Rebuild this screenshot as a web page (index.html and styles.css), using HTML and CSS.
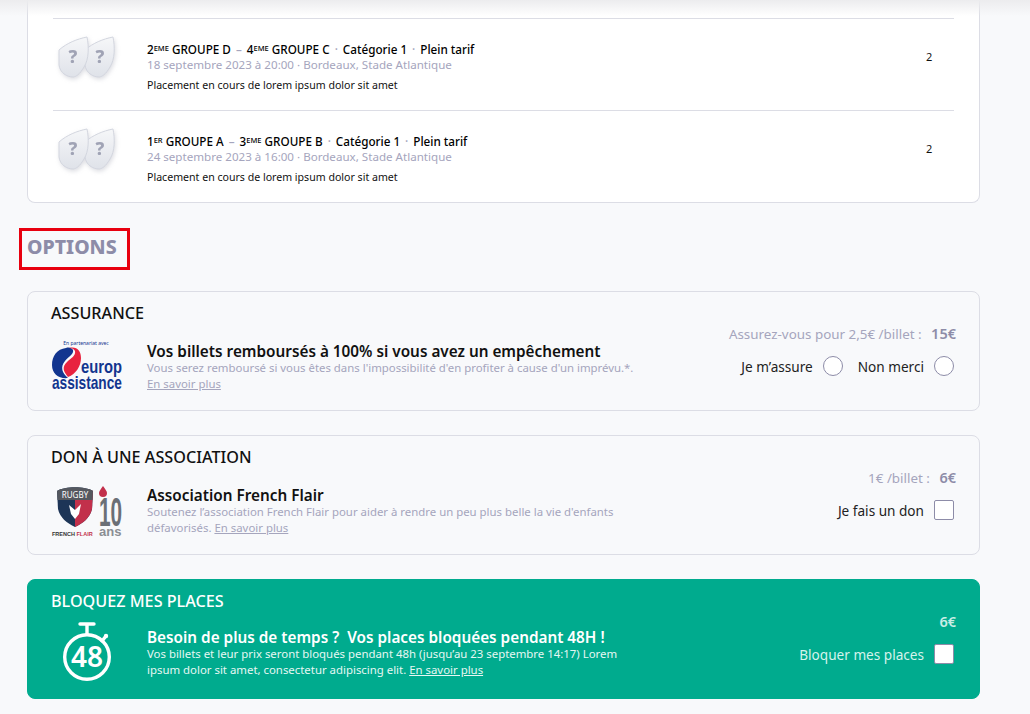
FILE: index.html
```html
<!DOCTYPE html>
<html lang="fr">
<head>
    <meta charset="utf-8" />
    <meta name="viewport" content="width=device-width, initial-scale=1" />
    <title>Options</title>
    <link rel="stylesheet" href="styles.css">
</head>
<body>
    <div class="top-shadow"></div>

    <svg width="0" height="0" class="defs">
        <defs>
            <linearGradient id="shield-fill" x1="0" y1="0" x2="0" y2="1">
                <stop offset="0" stop-color="#f6f7f9" />
                <stop offset="1" stop-color="#dfe2e9" />
            </linearGradient>
            <path id="shield" d="M0 13 C8 6 18 2 28 0 C30 10 30 22 25 30 C21 37 17 40 14 40 C8 40 1 36 0 28 Z" fill="url(#shield-fill)" stroke="#d3d6df" />
            <g id="shields">
                <use href="#shield" x="27" y="1" />
                <use href="#shield" x="1" y="1" />
                <text x="15" y="27" class="shield-mark">?</text>
                <text x="42" y="27" class="shield-mark">?</text>
            </g>
        </defs>
    </svg>

    <div class="page">
        <div class="matches">
            <div class="match">
                <svg class="shields" width="60" height="46" viewBox="0 0 60 46"><use href="#shields" /></svg>
                <div class="match-info">
                    <div class="match-title">2<sup>EME</sup> GROUPE D <span class="dash">–</span> 4<sup>EME</sup> GROUPE C <span class="dot">·</span> Catégorie 1 <span class="dot">·</span> Plein tarif</div>
                    <div class="match-date">18 septembre 2023 à 20:00 · Bordeaux, Stade Atlantique</div>
                    <div class="match-note">Placement en cours de lorem ipsum dolor sit amet</div>
                </div>
                <div class="match-qty">2</div>
            </div>
            <div class="match">
                <svg class="shields" width="60" height="46" viewBox="0 0 60 46"><use href="#shields" /></svg>
                <div class="match-info">
                    <div class="match-title">1<sup>ER</sup> GROUPE A <span class="dash">–</span> 3<sup>EME</sup> GROUPE B <span class="dot">·</span> Catégorie 1 <span class="dot">·</span> Plein tarif</div>
                    <div class="match-date">24 septembre 2023 à 16:00 · Bordeaux, Stade Atlantique</div>
                    <div class="match-note">Placement en cours de lorem ipsum dolor sit amet</div>
                </div>
                <div class="match-qty">2</div>
            </div>
        </div>

        <h2 class="section-title">OPTIONS</h2>

        <div class="option">
            <div class="option-main">
                <h3>ASSURANCE</h3>
                <div class="option-body">
                    <svg class="option-logo" width="72" height="56" viewBox="0 0 72 56">
                        <text x="35" y="5.5" class="ea-small">En partenariat avec</text>
                        <path d="M15 9 C6 10 1 17 1 26 C1 35 8 40 17 39 C11 34 9 28 14 22 C18 17 23 15 22 11 C21 9 18 8 15 9 Z" fill="#12358f" />
                        <path d="M18 9 C26 7 30 12 30 19 C30 27 25 35 17 38 C12 32 11 28 16 23 C20 19 25 17 24 12 C23 10 21 9 18 9 Z" fill="#e8233f" />
                        <text class="ea-big" transform="translate(30 34) scale(.82 1)">europ</text>
                        <text class="ea-big" transform="translate(1 50) scale(.76 1)">assistance</text>
                    </svg>
                    <div class="option-text">
                        <h4>Vos billets remboursés à 100% si vous avez un empêchement</h4>
                        <p>Vous serez remboursé si vous êtes dans l'impossibilité d'en profiter à cause d'un imprévu.*.<br><a href="#">En savoir plus</a></p>
                    </div>
                </div>
            </div>
            <div class="option-side">
                <div class="price">Assurez-vous pour 2,5€ /billet : <b>15€</b></div>
                <div class="choices">
                    <label class="choice">Je m’assure <span class="radio"></span></label>
                    <label class="choice">Non merci <span class="radio"></span></label>
                </div>
            </div>
        </div>

        <div class="option">
            <div class="option-main">
                <h3>DON À UNE ASSOCIATION</h3>
                <div class="option-body">
                    <svg class="option-logo" width="72" height="58" viewBox="0 0 72 58">
                        <path d="M6 8 C14 3 34 3 42 8 L41 26 C39 35 32 40 24 44 C16 40 9 35 7 26 Z" fill="#1d3557" />
                        <path d="M24 5 C31 5 37 6 42 8 L41 26 C39 35 32 40 24 44 Z" fill="#c2304b" />
                        <path d="M6 8 C14 3 34 3 42 8 L41.5 17 L6.5 17 Z" fill="#55585f" />
                        <text x="24" y="14.5" class="ff-rugby">RUGBY</text>
                        <path d="M18 22 L24 27 L30 21 L28 31 L24 36 L20 31 Z" fill="#fff" />
                        <text x="1" y="53" class="ff-name">FRENCH <tspan fill="#c2304b">FLAIR</tspan></text>
                        <path d="M52 3 C54 6 56 8 56 10 A4 4 0 0 1 48 10 C48 8 50 6 52 3 Z" fill="#c2304b" />
                        <text class="ff-ten" transform="translate(48 43) scale(.52 1)">10</text>
                        <text x="48" y="53" class="ff-ans">ans</text>
                    </svg>
                    <div class="option-text">
                        <h4>Association French Flair</h4>
                        <p>Soutenez l’association French Flair pour aider à rendre un peu plus belle la vie d'enfants défavorisés. <a href="#">En savoir plus</a></p>
                    </div>
                </div>
            </div>
            <div class="option-side">
                <div class="price">1€ /billet : <b>6€</b></div>
                <div class="choices">
                    <label class="choice">Je fais un don <span class="check"></span></label>
                </div>
            </div>
        </div>

        <div class="option option-green">
            <div class="option-main">
                <h3>BLOQUEZ MES PLACES</h3>
                <div class="option-body">
                    <svg class="option-logo" width="72" height="64" viewBox="0 0 72 64">
                        <g fill="none" stroke="#fff" stroke-width="3.4">
                            <circle cx="36" cy="38" r="22.3" />
                            <path d="M36 15 V5 M29 5 H43 M51 22 L55 17" stroke-linecap="round" />
                        </g>
                        <circle cx="55" cy="17" r="2.2" fill="#fff" />
                        <text x="36" y="48" class="timer-num">48</text>
                    </svg>
                    <div class="option-text">
                        <h4>Besoin de plus de temps ?&nbsp; Vos places bloquées pendant 48H !</h4>
                        <p>Vos billets et leur prix seront bloqués pendant 48h (jusqu’au 23 septembre 14:17) Lorem ipsum dolor sit amet, consectetur adipiscing elit. <a href="#">En savoir plus</a></p>
                    </div>
                </div>
            </div>
            <div class="option-side">
                <div class="price"><b>6€</b></div>
                <div class="choices">
                    <label class="choice">Bloquer mes places <span class="check"></span></label>
                </div>
            </div>
        </div>
    </div>
</body>
</html>
```

FILE: styles.css
```css
body {
    font-family: 'Noto Sans', Roboto, sans-serif;
    background-color: #f8f9fb;
    color: #111;
    margin: 0;
    padding: 0;
}

.defs {
    position: absolute;
}

.top-shadow {
    position: absolute;
    top: 0;
    left: 0;
    right: 0;
    height: 16px;
    background: linear-gradient(#ececee, rgba(240, 240, 242, 0));
}

.page {
    width: 953px;
    margin-left: 27px;
}

.matches {
    background-color: #fff;
    border: 1px solid #dcdde5;
    border-top: none;
    border-radius: 0 0 8px 8px;
    padding: 18px 25px 0 25px;
    height: 184px;
}

.match {
    display: flex;
    align-items: flex-start;
    height: 91px;
    border-top: 1px solid #dcdde5;
}

.shields {
    margin-top: 17px;
    margin-left: 5px;
    margin-right: 29px;
    flex-shrink: 0;
    filter: drop-shadow(1px 2px 2px rgba(120, 125, 145, 0.25));
}

.shield-mark {
    font-size: 18px;
    font-weight: 800;
    fill: #a0a3b5;
    text-anchor: middle;
}

.match-info {
    flex: 1;
    padding-top: 22px;
}

.match-title {
    font-size: 11.7px;
    font-weight: 500;
    line-height: 16px;
    color: #000;
}

.match-title sup {
    font-size: 7.5px;
    line-height: 0;
    vertical-align: 3px;
}

.match-title .dash,
.match-title .dot {
    color: #a5a5bd;
    margin: 0 2px;
}

.match-date {
    font-size: 11.6px;
    line-height: 16px;
    color: #a5a5bd;
}

.match-note {
    font-size: 10.6px;
    line-height: 16px;
    margin-top: 4px;
}

.match-qty {
    font-size: 11px;
    line-height: 16px;
    width: 28px;
    padding-top: 30px;
}

.section-title {
    display: inline-block;
    font-size: 19.5px;
    font-weight: 800;
    line-height: 32px;
    color: #8d8ca8;
    border: 3px solid #e8000f;
    padding: 0 10px 4px 5px;
    margin: 25px 0 21px -8px;
    vertical-align: top;
}

.option {
    display: flex;
    justify-content: space-between;
    box-sizing: border-box;
    height: 120px;
    margin-bottom: 24px;
    padding: 12px 25px 0 23px;
    border: 1px solid #dcdde5;
    border-radius: 8px;
}

.option-main {
    flex: 1;
}

.option h3 {
    font-size: 16.2px;
    font-weight: 500;
    line-height: 18px;
    margin: 0;
}

.option-body {
    display: flex;
    align-items: flex-start;
    margin-top: 17px;
}

.option-logo {
    flex-shrink: 0;
    margin-right: 24px;
}

.option-text {
    width: 490px;
    padding-top: 4px;
}

.option-text h4 {
    font-size: 15.3px;
    font-weight: 600;
    line-height: 17px;
    margin: 0;
}

.option-text p {
    font-size: 11.4px;
    line-height: 15.5px;
    color: #a5a5bd;
    margin: 0;
}

.option-text a {
    color: inherit;
}

.option-side {
    padding-top: 20px;
    text-align: right;
}

.price {
    font-size: 13.4px;
    line-height: 18px;
    color: #a5a5bd;
    margin-right: -2px;
}

.price b {
    color: #8d8ca8;
    font-weight: 600;
    font-size: 14.5px;
    margin-left: 6px;
}

.choices {
    display: flex;
    justify-content: flex-end;
    gap: 15px;
    margin-top: 13px;
}

.choice {
    display: flex;
    align-items: center;
    gap: 10px;
    font-size: 13.6px;
    color: #222;
}

.radio,
.check {
    display: inline-block;
    box-sizing: border-box;
    width: 20px;
    height: 20px;
    background-color: #fff;
    border: 1px solid #8d8ca8;
}

.radio {
    border-radius: 50%;
}

.check {
    border-radius: 2px;
}

.option-green {
    background-color: #00ab8e;
    border-color: #00ab8e;
    color: #fff;
}

.option-green .option-body {
    margin-top: 9px;
}

.option-green .option-text {
    padding-top: 10px;
}

.option-green .option-text p,
.option-green .option-text a {
    color: #e6f7f3;
}

.option-green .price b {
    color: #c9eee6;
}

.option-green .choice {
    color: #d5f3ec;
}

.ea-small {
    font-size: 5px;
    fill: #12358f;
    text-anchor: middle;
}

.ea-big {
    font-family: 'Liberation Sans', sans-serif;
    font-size: 18px;
    font-weight: 700;
    fill: #12358f;
}

.ff-rugby {
    font-size: 8px;
    fill: #fff;
    text-anchor: middle;
}

.ff-name {
    font-family: 'Liberation Sans', sans-serif;
    font-size: 5.5px;
    font-weight: 700;
    fill: #333;
}

.ff-ten {
    font-family: 'Liberation Sans', sans-serif;
    font-size: 40px;
    font-weight: 700;
    fill: #6b6f76;
}

.ff-ans {
    font-family: 'Liberation Sans', sans-serif;
    font-size: 13px;
    font-weight: 700;
    fill: #8b8e94;
}

.timer-num {
    font-size: 28px;
    font-weight: 600;
    fill: #fff;
    text-anchor: middle;
}
```
